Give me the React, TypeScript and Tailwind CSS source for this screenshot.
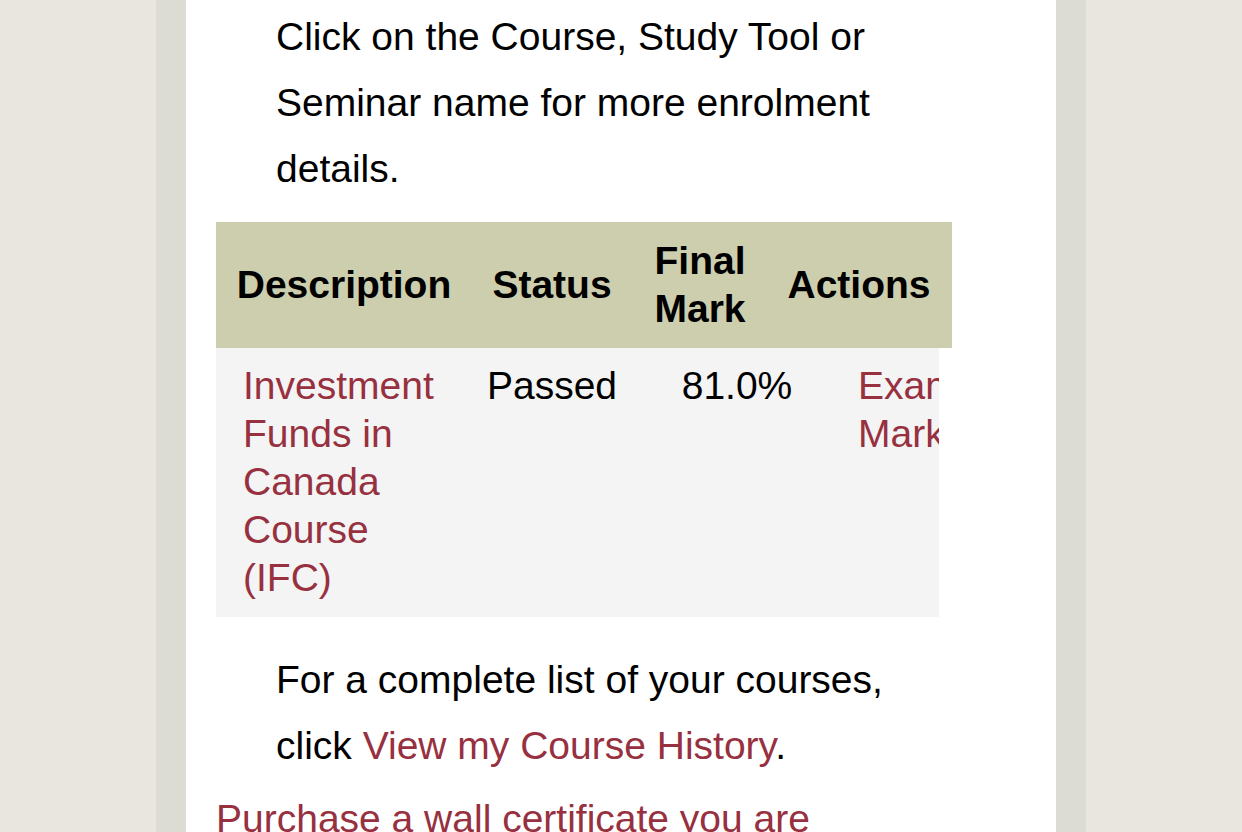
export default function App() {
  return (
    <div className="flex h-[832px] w-[1242px] overflow-hidden bg-[#e8e6df] font-['Liberation_Sans',Arial,sans-serif] text-[39px] text-black">
      <div className="ml-[156px] flex w-[930px] bg-[#dcdbd4] px-[30px]">
        <div className="w-[870px] bg-white pl-[30px] pt-[4px]">
          <p className="pl-[60px] pr-[150px] leading-[66px]">
            Click on the Course, Study Tool or Seminar name for more enrolment details.
          </p>

          {/* enrolment table */}
          <div className="mt-[20px] w-[736px]">
            <div className="flex h-[126px] items-center bg-[#cdcead] font-bold leading-[48px]">
              <div className="w-[256px] text-center">Description</div>
              <div className="w-[160px] text-center">Status</div>
              <div className="w-[136px] text-center">
                Final
                <br />
                Mark
              </div>
              <div className="w-[182px] text-center">Actions</div>
            </div>
            <div className="flex w-[723px] overflow-hidden bg-[#f4f4f4] pt-[14px] pb-[15px] leading-[48px]">
              <div className="w-[244px] shrink-0 pl-[27px] text-[#97303f]">
                Investment Funds in Canada Course (IFC)
              </div>
              <div className="w-[184px] shrink-0 text-center">Passed</div>
              <div className="w-[186px] shrink-0 text-center">81.0%</div>
              <div className="w-[200px] shrink-0 pl-[28px] text-[#97303f]">
                Exam
                <br />
                Mark
              </div>
            </div>
          </div>

          <p className="mt-[30px] pl-[60px] pr-[150px] leading-[66px]">
            For a complete list of your courses, click{' '}
            <a className="text-[#97303f]">View my Course History</a>.
          </p>
          <p className="mt-[7px] pr-[150px] leading-[66px] text-[#97303f]">
            Purchase a wall certificate you are eligible for.
          </p>
        </div>
      </div>
    </div>
  );
}
